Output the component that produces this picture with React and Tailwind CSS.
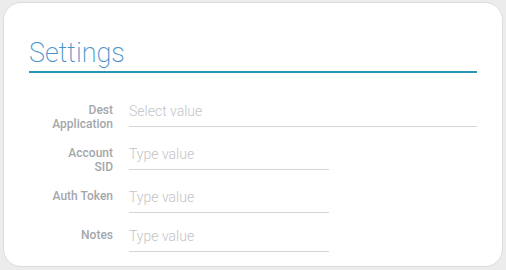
import React from "react";

const fields = [
  { label: ["Dest", "Application"], placeholder: "Select value", wide: true },
  { label: ["Account", "SID"], placeholder: "Type value" },
  { label: ["Auth Token"], placeholder: "Type value" },
  { label: ["Notes"], placeholder: "Type value" },
];

const Field = ({ label, placeholder, wide }) => (
  <div className="flex items-start">
    <div className="w-[84px] shrink-0 text-right text-[12px] font-medium leading-[14px] text-[#a3a7ab]">
      {label.map((line) => (
        <div key={line}>{line}</div>
      ))}
    </div>
    <div
      className={`ml-4 h-[24px] border-b border-solid border-b-[#d6d6d6] text-[14px] font-light leading-4 text-[#c4c4c4] ${
        wide ? "flex-1" : "w-[200px]"
      }`}
    >
      {placeholder}
    </div>
  </div>
);

export default function App() {
  return (
    <div className="h-[270px] w-[506px] bg-[#ececec] pl-[3px] pt-[2px] font-['Roboto',sans-serif]">
      <div className="h-[265px] w-[500px] rounded-[18px] border border-[#dcdcdc] bg-white px-[25px] pt-[32px]">
        <h1 className="text-[27px] font-extralight leading-[36px] text-[#4a93c8]">Settings</h1>
        <div className="h-[2px] bg-[#2b95b5]" />
        <div className="mt-[30px] flex flex-col gap-[15px]">
          {fields.map((f) => (
            <Field key={f.placeholder + f.label[0]} {...f} />
          ))}
        </div>
      </div>
    </div>
  );
}
